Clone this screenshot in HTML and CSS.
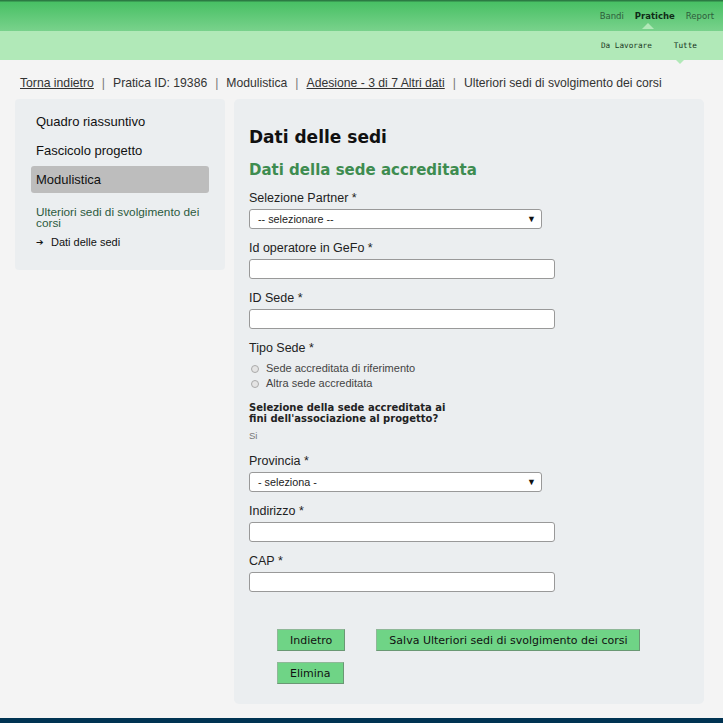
FILE: index.html
```html
<!DOCTYPE html>
<html lang="it">
<head>
<meta charset="utf-8">
<title>Dati delle sedi</title>
<link rel="stylesheet" href="styles.css">
</head>
<body>
<header class="topbar">
  <nav class="mainnav">
    <a class="nav-item">Bandi</a>
    <a class="nav-item active">Pratiche</a>
    <a class="nav-item">Report</a>
  </nav>
</header>
<div class="subbar">
  <nav class="subnav">
    <a class="sub-item">Da Lavorare</a>
    <a class="sub-item active">Tutte</a>
  </nav>
</div>
<div class="breadcrumb"><a class="crumb-link">Torna indietro</a><span class="sep">|</span><span>Pratica ID: 19386</span><span class="sep">|</span><span>Modulistica</span><span class="sep">|</span><a class="crumb-link">Adesione - 3 di 7 Altri dati</a><span class="sep">|</span><span>Ulteriori sedi di svolgimento dei corsi</span></div>
<div class="layout">
  <aside class="sidebar">
    <a class="side-item">Quadro riassuntivo</a>
    <a class="side-item">Fascicolo progetto</a>
    <a class="side-item selected">Modulistica</a>
    <div class="side-section">Ulteriori sedi di svolgimento dei corsi</div>
    <div class="side-sub"><span class="arrow">&#10132;</span>Dati delle sedi</div>
  </aside>
  <main class="panel">
    <h1 class="title">Dati delle sedi</h1>
    <h2 class="subtitle">Dati della sede accreditata</h2>
    <div class="field">
      <label class="label">Selezione Partner *</label>
      <div class="select"><span>-- selezionare --</span><span class="caret">&#9660;</span></div>
    </div>
    <div class="field">
      <label class="label">Id operatore in GeFo *</label>
      <div class="input"></div>
    </div>
    <div class="field">
      <label class="label">ID Sede *</label>
      <div class="input"></div>
    </div>
    <div class="field">
      <label class="label">Tipo Sede *</label>
      <div class="radios">
        <div class="radio"><span class="dot"></span>Sede accreditata di riferimento</div>
        <div class="radio"><span class="dot"></span>Altra sede accreditata</div>
      </div>
    </div>
    <div class="field field-question">
      <div class="question">Selezione della sede accreditata ai<br>fini dell'associazione al progetto?</div>
      <div class="value">Si</div>
    </div>
    <div class="field">
      <label class="label">Provincia *</label>
      <div class="select"><span>- seleziona -</span><span class="caret">&#9660;</span></div>
    </div>
    <div class="field">
      <label class="label">Indirizzo *</label>
      <div class="input"></div>
    </div>
    <div class="field">
      <label class="label">CAP *</label>
      <div class="input"></div>
    </div>
    <div class="actions">
      <div class="row">
        <button class="btn">Indietro</button>
        <button class="btn">Salva Ulteriori sedi di svolgimento dei corsi</button>
      </div>
      <div class="row">
        <button class="btn">Elimina</button>
      </div>
    </div>
  </main>
</div>
<footer class="footer"></footer>
</body>
</html>
```
FILE: styles.css
```css
* { box-sizing: border-box; }
html, body { margin: 0; padding: 0; }
body {
  background: #f4f4f4;
  font-family: "Liberation Sans", Arial, sans-serif;
  font-size: 12px;
  color: #222;
}
.topbar {
  height: 31px;
  background: linear-gradient(#2c7a43 0, #2c7a43 1px, #48c064 2px, #79d28c 31px);
  display: flex;
  justify-content: flex-end;
  align-items: center;
  padding-right: 9px;
}
.mainnav { display: flex; gap: 11px; }
.nav-item {
  font-family: "DejaVu Sans", sans-serif;
  font-size: 8.5px;
  color: #2d5c3a;
  position: relative;
}
.nav-item.active { color: #0f2a17; font-weight: bold; }
.nav-item.active::after {
  content: "";
  position: absolute;
  left: 50%;
  margin-left: -13px;
  top: 12px;
  border: 6px solid transparent;
  border-bottom-color: #b1e9b8;
  border-top: 0;
}
.subbar {
  height: 29px;
  background: #b1e9b8;
  display: flex;
  justify-content: flex-end;
  align-items: center;
  padding-right: 26px;
}
.subnav { display: flex; gap: 22px; }
.sub-item {
  font-family: "DejaVu Sans Mono", monospace;
  font-size: 7.7px;
  color: #1d3a25;
  position: relative;
}
.sub-item.active { color: #0f2a17; }
.sub-item.active::after {
  content: "";
  position: absolute;
  left: 50%;
  margin-left: -12px;
  top: 16px;
  border: 7px solid transparent;
  border-top-color: #b1e9b8;
  border-bottom: 0;
}
.breadcrumb {
  padding: 16px 20px 8px;
  font-size: 12.2px;
  color: #333;
  line-height: 15px;
}
.crumb-link { text-decoration: underline; color: #333; }
.sep { color: #777; margin: 0 8px; }
.layout {
  display: flex;
  gap: 9px;
  padding: 0 19px 0 15px;
  align-items: flex-start;
}
.sidebar {
  width: 210px;
  background: #ebeef0;
  border-radius: 4px;
  padding: 9px 16px 21px;
  display: flex;
  flex-direction: column;
}
.side-item {
  display: block;
  font-size: 13px;
  color: #111;
  padding: 0 5px;
  margin: 0 0 2px;
  height: 27px;
  line-height: 27px;
}
.side-item.selected {
  background: #bdbdbd;
  border-radius: 3px;
}
.side-section {
  margin-top: 12px;
  padding: 0 5px;
  font-size: 11.8px;
  line-height: 10.5px;
  color: #2c5a3e;
}
.side-sub {
  margin-top: 8px;
  padding: 0 5px;
  font-size: 11px;
  line-height: 13px;
  color: #111;
  display: flex;
  align-items: center;
}
.arrow {
  font-family: "DejaVu Sans", sans-serif;
  font-size: 9px;
  width: 15px;
}
.panel {
  width: 470px;
  background: #ebeef0;
  border-radius: 5px;
  padding: 27px 15px 20px;
}
.title {
  margin: 0;
  font-family: "DejaVu Sans", sans-serif;
  font-weight: bold;
  font-size: 17px;
  color: #111;
  line-height: 22px;
}
.subtitle {
  margin: 13px 0 5px;
  font-family: "DejaVu Sans", sans-serif;
  font-weight: bold;
  font-size: 15px;
  color: #3e8c50;
  line-height: 18px;
}
.field { margin-top: 12px; }
.field.field-question { margin-top: 11px; }
.label {
  display: block;
  font-size: 12.5px;
  color: #222;
  line-height: 15px;
  margin-bottom: 3px;
}
.question {
  font-family: "DejaVu Sans", sans-serif;
  font-weight: bold;
  font-size: 10px;
  line-height: 11px;
  color: #222;
}
.select {
  width: 293px;
  height: 20px;
  background: #fff;
  border: 1px solid #999;
  border-radius: 3px;
  display: flex;
  justify-content: space-between;
  align-items: center;
  padding: 0 5px 0 8px;
  font-size: 10.8px;
  color: #222;
}
.caret { font-size: 9px; color: #111; }
.input {
  width: 306px;
  height: 20px;
  background: #fff;
  border: 1px solid #999;
  border-radius: 3px;
}
.radios { margin-top: 5px; }
.radio {
  display: flex;
  align-items: center;
  font-size: 11px;
  color: #444;
  line-height: 15px;
}
.dot {
  width: 8px; height: 8px;
  border: 1px solid #aaa;
  border-radius: 50%;
  background: #e4e4e4;
  margin: 0 7px 0 2px;
}
.value {
  font-size: 9.5px;
  line-height: 12px;
  color: #777;
  margin-top: 6px;
}
.actions {
  margin-top: 37px;
  padding-left: 28px;
  display: flex;
  flex-direction: column;
  gap: 11px;
}
.row { display: flex; gap: 31px; }
.btn {
  height: 22px;
  padding: 0 12px;
  background: #6fd486;
  border: 1px solid #8fb898;
  border-bottom-color: #6a9874;
  border-right-color: #6a9874;
  font-family: "DejaVu Sans", sans-serif;
  font-size: 11px;
  color: #111;
}
.footer {
  margin-top: 14px;
  height: 6px;
  background: #003352;
}
```
